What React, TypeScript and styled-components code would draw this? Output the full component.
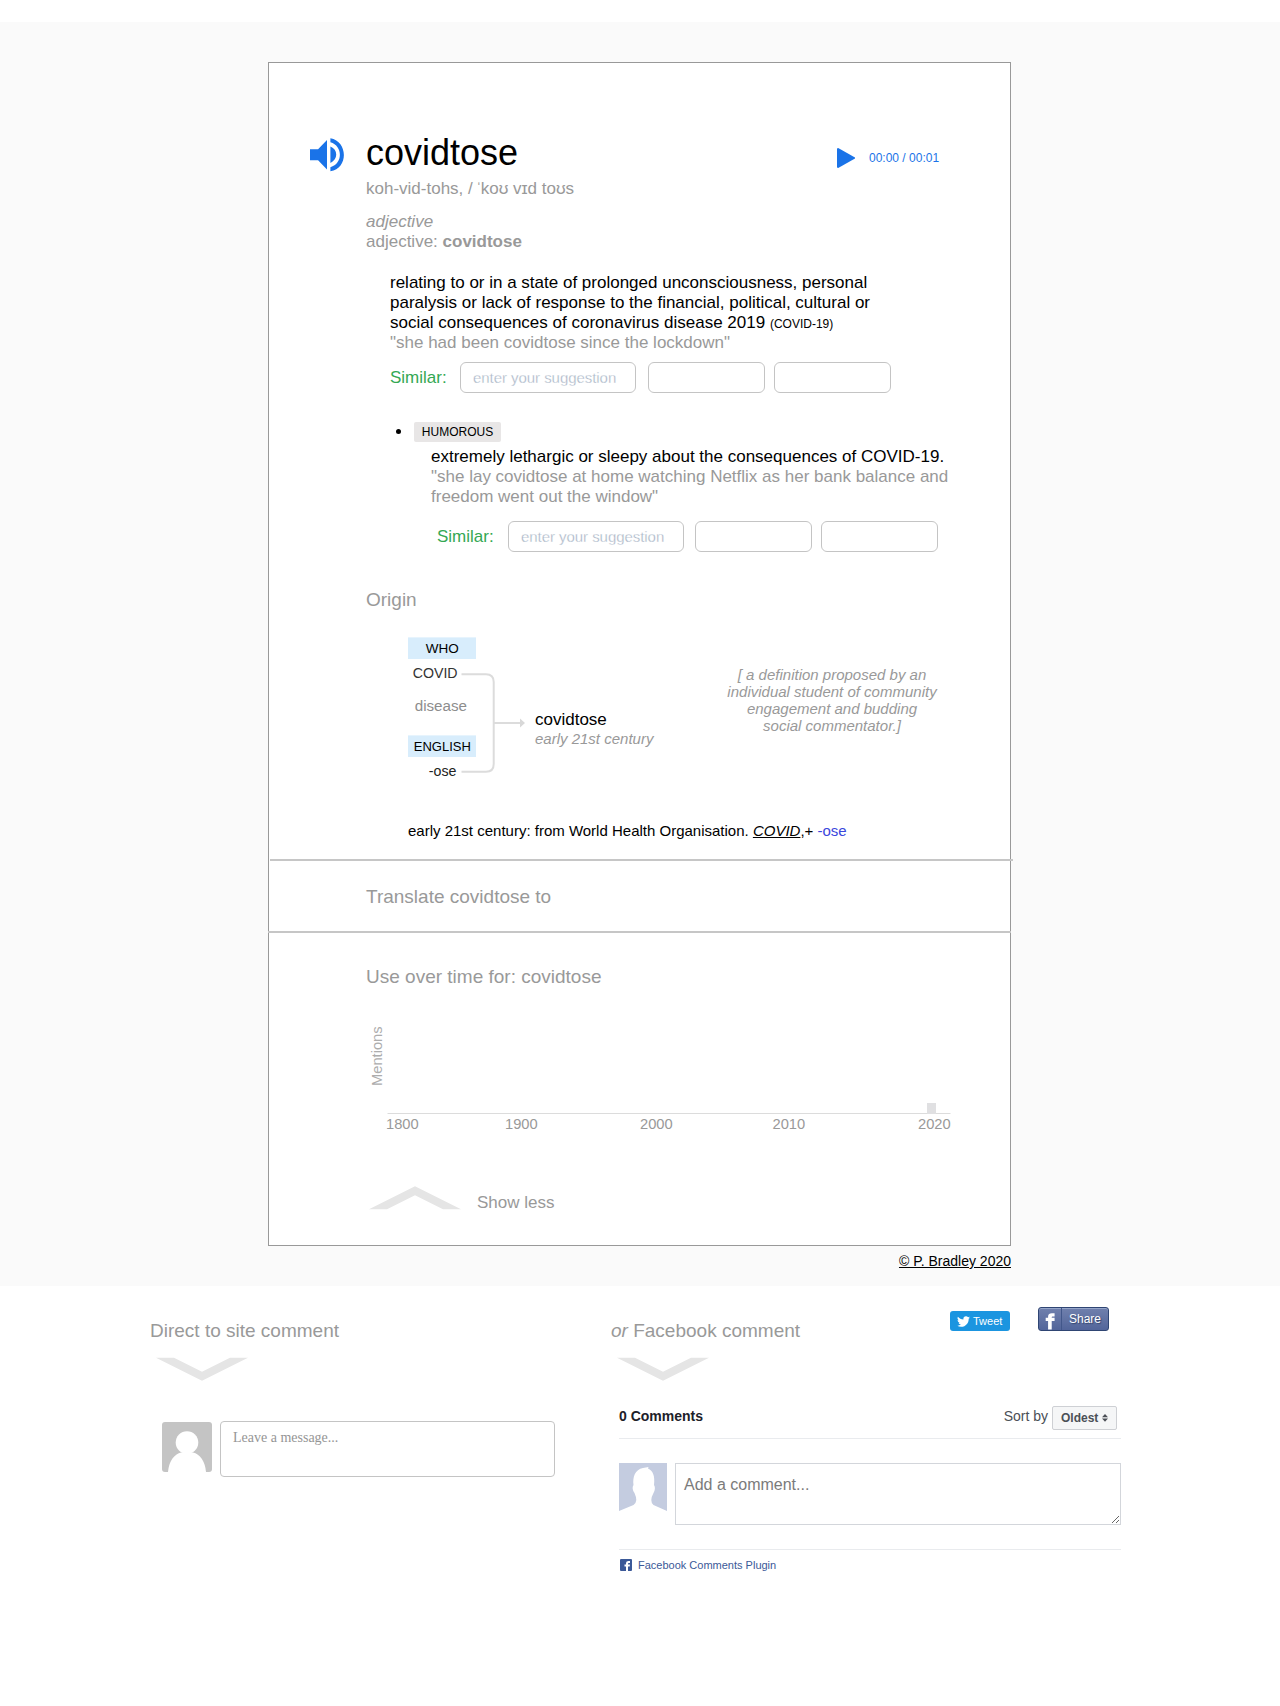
import React from "react";
import styled, { createGlobalStyle } from "styled-components";

const sans = '"Liberation Sans", Arial, sans-serif';
const grey = "#999";

const GlobalStyle = createGlobalStyle`
  * { box-sizing: border-box; }
  body { margin: 0; background: #fff; font-family: ${sans}; color: #000; }
  p, h1, h2, ul { margin: 0; padding: 0; font-weight: normal; }
  a { color: inherit; }
`;

const Page = styled.main`
  width: 1280px;
  min-height: 1706px;
  padding-top: 22px;
`;

const Band = styled.section`
  height: 1264px;
  padding-top: 40px;
  background: #fafafa;
`;

const Card = styled.article`
  width: 743px;
  height: 1184px;
  margin-left: 268px;
  border: 1px solid #999;
  background: #fff;
`;

const Entry = styled.section`
  height: 796px;
  padding: 69px 0 0 97px;
`;

const Header = styled.header`
  display: flex;
  height: 41px;
  margin-left: -57px;
`;

const Speaker = styled.svg`
  width: 34px;
  height: 34px;
  margin: 6px 22px 0 1px;
  fill: #1a73e8;
`;

const Word = styled.h1`
  width: 471px;
  font-size: 36px;
  line-height: 41px;
`;

const Player = styled.div`
  display: flex;
  align-items: center;
  gap: 14px;
  height: 20px;
  margin-top: 16px;
  color: #1a73e8;
  font-size: 12px;
  line-height: 14px;
`;

const Text = styled.p<{ $muted?: boolean; $top?: number }>`
  margin-top: ${(p) => p.$top ?? 0}px;
  color: ${(p) => (p.$muted ? grey : "#000")};
  font-size: 17px;
  line-height: 20px;
`;

const Stress = styled.span`
  margin: 0 -1px 0 -1.5px;
`;

const Heading = styled.h2<{ $top: number }>`
  margin-top: ${(p) => p.$top}px;
  color: ${grey};
  font-size: 19px;
  line-height: 22px;
  white-space: nowrap;
`;

const Sense = styled.div`
  width: 500px;
  margin: 21px 0 0 24px;
`;

const Small = styled.span`
  font-size: 12px;
  line-height: 1;
`;

const SimilarRow = styled.form<{ $left: number; $top: number; $gap: number }>`
  display: grid;
  grid-template-columns: ${(p) => (p.$left === 24 ? 70 : 71)}px 176px 117px 117px;
  align-items: center;
  height: 31px;
  margin: ${(p) => p.$top}px 0 0 ${(p) => p.$left}px;
  input + input { margin-left: ${(p) => p.$gap}px; }
  input + input + input { margin-left: ${(p) => p.$gap + 9}px; }
`;

const SimilarLabel = styled.label`
  color: #34a853;
  font-size: 17px;
  line-height: 20px;
`;

const Suggestion = styled.input<{ $wide?: boolean }>`
  width: ${(p) => (p.$wide ? 176 : 117)}px;
  height: 31px;
  padding: 0 12px;
  border: 1px solid #c4c4c4;
  border-radius: 6px;
  outline: none;
  background: #fff;
  font: 15px ${sans};
  letter-spacing: -0.05px;
  &::placeholder {
    color: #a4b1c3;
    opacity: 1;
    -webkit-text-stroke: 0.3px #fff;
  }
`;

const HumorousRow = styled.div`
  display: flex;
  align-items: center;
  gap: 13px;
  height: 20px;
  margin: 29px 0 5px 30px;
`;

const Bullet = styled.i`
  width: 5px;
  height: 5px;
  margin-bottom: 1px;
  border-radius: 50%;
  background: #000;
`;

const Tag = styled.span`
  width: 87px;
  height: 20px;
  border-radius: 2px;
  background: #e8e6e6;
  font-size: 12px;
  line-height: 20px;
  text-align: center;
`;

const HumorousText = styled.div`
  width: 540px;
  margin-left: 65px;
`;

const OriginRow = styled.div`
  display: flex;
  height: 170px;
  margin: 19px 0 0 42px;
`;

const Diagram = styled.svg`
  width: 120px;
  height: 170px;
  font-family: ${sans};
`;

const Result = styled.div`
  width: 150px;
  margin: 80px 0 0 7px;
`;

const Era = styled.p`
  color: ${grey};
  font-size: 15px;
  font-style: italic;
  line-height: 17px;
`;

const Note = styled(Era)`
  width: 294px;
  margin-top: 36px;
  text-align: center;
`;

const Etymology = styled.p`
  margin: 22px 0 0 42px;
  font-size: 15px;
  line-height: 17px;
  a { font-style: italic; }
  span { color: #3a46dc; }
`;

const Rule = styled.hr<{ $shift: number }>`
  width: 743px;
  height: 2px;
  margin: 0 0 0 ${(p) => p.$shift}px;
  border: 0;
  background: #c6c6c6;
`;

const Translate = styled.section`
  height: 70px;
  padding-left: 97px;
  overflow: hidden;
`;

const Usage = styled.section`
  display: flow-root;
  padding-left: 97px;
`;

const Chart = styled.svg`
  display: block;
  width: 600px;
  height: 130px;
  margin-top: 22px;
  font-family: ${sans};
  font-size: 14.7px;
  fill: ${grey};
`;

const ShowLess = styled.div`
  display: flex;
  gap: 15px;
  margin: 46px 0 0 3px;
`;

const Arrow = styled.svg<{ $up?: boolean }>`
  display: block;
  width: 93px;
  height: 24px;
  fill: #e5e5e5;
  transform: ${(p) => (p.$up ? "scaleY(-1)" : "none")};
`;

const Copyright = styled.p`
  width: 743px;
  margin: 7px 0 0 268px;
  font-size: 14px;
  line-height: 16px;
  text-align: right;
`;

const Comments = styled.section`
  display: grid;
  grid-template-columns: 461px 510px;
  padding: 21px 0 0 150px;
`;

const TopRow = styled.div`
  display: flex;
  align-items: flex-start;
  height: 35px;
  margin-bottom: 15px;
`;

const FbHeading = styled(Heading)`
  width: 339px;
`;

const Tweet = styled.a`
  display: flex;
  align-items: center;
  gap: 3px;
  width: 60px;
  height: 20px;
  margin-top: 4px;
  padding-left: 7px;
  border-radius: 3px;
  background: #1b95e0;
  color: #fff;
  font-size: 11px;
`;

const Share = styled.a`
  display: flex;
  width: 71px;
  height: 24px;
  margin-left: 28px;
  border: 1px solid #2f4573;
  border-radius: 3px;
  background: linear-gradient(#7080ad, #52659a);
  box-shadow: inset 0 1px 0 #95a5c9;
  color: #fff;
  font-size: 12px;
  line-height: 22px;
  text-shadow: 1px 1px 1px #33466f;
  svg { width: 23px; height: 22px; border-right: 1px solid #42578a; }
  span { padding-left: 7px; }
`;

const ArrowSlot = styled.div`
  padding-left: 6px;
`;

const MessageRow = styled.div`
  display: flex;
  gap: 8px;
  margin: 40px 0 0 12px;
`;

const Avatar = styled.svg`
  width: 50px;
  height: 50px;
  margin-top: 1px;
  border-radius: 3px;
`;

const Message = styled.textarea`
  width: 335px;
  height: 56px;
  padding: 8px 12px;
  border: 1px solid #c4c4c4;
  border-radius: 4px;
  resize: none;
  outline: none;
  font: 14px/16px "Liberation Serif", "Times New Roman", serif;
  &::placeholder { color: #959595; opacity: 1; }
`;

const FbPlugin = styled.div`
  width: 502px;
  margin: 25px 0 0 8px;
`;

const FbHead = styled.div`
  display: flex;
  height: 33px;
  padding-right: 4px;
  border-bottom: 1px solid #e9ebee;
  color: #4b4f56;
  font-size: 14px;
  line-height: 20px;
  strong { flex: 1; color: #1d2129; }
`;

const Sort = styled.button`
  display: flex;
  align-items: center;
  gap: 4px;
  width: 65px;
  height: 24px;
  margin-left: 4px;
  padding: 0 0 0 8px;
  border: 1px solid #ced0d4;
  border-radius: 2px;
  background: #f5f6f7;
  color: #4b4f56;
  font: bold 12px/22px ${sans};
`;

const FbCompose = styled.div`
  display: flex;
  gap: 8px;
  height: 111px;
  padding-top: 24px;
  border-bottom: 1px solid #e9ebee;
`;

const FbTextarea = styled.textarea`
  width: 446px;
  height: 62px;
  padding: 12px 8px;
  border: 1px solid #d3d6db;
  outline: none;
  font: 16px/18px ${sans};
  &::placeholder { color: #7b7b7b; opacity: 1; }
`;

const FbFooter = styled.div`
  display: flex;
  align-items: center;
  gap: 6px;
  height: 12px;
  margin: 9px 0 0 1px;
  color: #3b5998;
  font-size: 11px;
`;

function Chevron({ up }: { up?: boolean }) {
  return (
    <Arrow $up={up} viewBox="0 0 93 24">
      <path d="M0 .7H18L46 14.700L74 .7H92L46 23.700Z" />
    </Arrow>
  );
}

function Similar({ left, top, gap }: { left: number; top: number; gap: number }) {
  return (
    <SimilarRow $left={left} $top={top} $gap={gap}>
      <SimilarLabel>Similar:</SimilarLabel>
      <Suggestion $wide placeholder="enter your suggestion" />
      <Suggestion />
      <Suggestion />
    </SimilarRow>
  );
}

function OriginDiagram() {
  return (
    <Diagram viewBox="408 630 120 170">
      <rect x="408" y="637.4" width="68" height="21.6" fill="#d8edfc" />
      <rect x="408" y="735.4" width="68" height="21.6" fill="#d8edfc" />
      <text x="442.3" y="653" fontSize="13.5" textAnchor="middle">WHO</text>
      <text x="412.7" y="678" fontSize="14.2" fill="#333">COVID</text>
      <text x="414.7" y="711" fontSize="15.2" fill="#8d8d8d">disease</text>
      <text x="442.3" y="751" fontSize="13" textAnchor="middle">ENGLISH</text>
      <text x="428.8" y="776" fontSize="14.2" fill="#222">-ose</text>
      <path
        d="M461.5 674.3H486Q493.7 674.3 493.7 682V764Q493.7 771.800 486 771.800H461.5M494 723H521"
        fill="none"
        stroke="#dcdcdc"
        strokeWidth="2"
      />
      <path d="M520 718.5L525 723L520 727.5Z" fill="#d8d8d8" />
    </Diagram>
  );
}

const years = [
  { label: "1800", x: 386 },
  { label: "1900", x: 505 },
  { label: "2000", x: 640 },
  { label: "2010", x: 772.5 },
  { label: "2020", x: 918 },
];

function UsageChart() {
  return (
    <Chart viewBox="366 1010 600 130">
      <text transform="translate(382 1086) rotate(-90)" fill="#adadad">Mentions</text>
      <rect x="387.5" y="1113" width="563" height="1" fill="#dcdcdc" />
      <rect x="927" y="1103" width="9" height="11" fill="#e0e0e2" />
      {years.map((y) => (
        <text key={y.label} x={y.x} y="1129">{y.label}</text>
      ))}
    </Chart>
  );
}

export default function App() {
  return (
    <Page>
      <GlobalStyle />
      <Band>
        <Card>
          <Entry>
            <Header>
              <Speaker viewBox="0 0 35 35">
                <path d="M0 11.7H8.3L17.5 2V32.5L8.3 22.8H0ZM21 8.8C29 12 29 22 21 25.7ZM21 .2C39 3 40 31.500 21 34.300V30C34 26.500 34 8 21 4.400Z" />
              </Speaker>
              <Word>covidtose</Word>
              <Player>
                <svg width="18" height="20" viewBox="0 0 18 20">
                  <path d="M0 1Q0 0 1.2 0L18 9.500V10.500L1.200 20Q0 20 0 19Z" fill="#1a73e8" />
                </svg>
                00:00 / 00:01
              </Player>
            </Header>
            <Text $muted $top={6}>
              koh-vid-tohs, / <Stress>ˈ</Stress>koʊ vɪd toʊs
            </Text>
            <Text $muted $top={13}>
              <em>adjective</em>
              <br />
              adjective: <strong>covidtose</strong>
            </Text>
            <Sense>
              <Text>
                relating to or in a state of prolonged unconsciousness, personal
                <br />
                paralysis or lack of response to the financial, political, cultural or
                <br />
                social consequences of coronavirus disease 2019 <Small>(COVID-19)</Small>
              </Text>
              <Text $muted>"she had been covidtose since the lockdown"</Text>
            </Sense>
            <Similar left={24} top={9} gap={12} />
            <HumorousRow>
              <Bullet />
              <Tag>HUMOROUS</Tag>
            </HumorousRow>
            <HumorousText>
              <Text>extremely lethargic or sleepy about the consequences of COVID-19.</Text>
              <Text $muted>
                "she lay covidtose at home watching Netflix as her bank balance and
                <br />
                freedom went out the window"
              </Text>
            </HumorousText>
            <Similar left={71} top={14} gap={11} />
            <Heading $top={37}>Origin</Heading>
            <OriginRow>
              <OriginDiagram />
              <Result>
                <Text>covidtose</Text>
                <Era>early 21st century</Era>
              </Result>
              <Note>
                [ a definition proposed by an
                <br />
                individual student of community
                <br />
                engagement and budding
                <br />
                social commentator.]
              </Note>
            </OriginRow>
            <Etymology>
              early 21st century: from World Health Organisation. <a href="#covid">COVID</a>,+ <span>-ose</span>
            </Etymology>
          </Entry>
          <Rule $shift={1} />
          <Translate>
            <Heading $top={25}>Translate covidtose to</Heading>
          </Translate>
          <Rule $shift={-1} />
          <Usage>
            <Heading $top={33}>Use over time for: covidtose</Heading>
            <UsageChart />
            <ShowLess>
              <Chevron up />
              <Text $muted $top={7}>Show less</Text>
            </ShowLess>
          </Usage>
        </Card>
        <Copyright>
          <a href="#copyright">© P. Bradley 2020</a>
        </Copyright>
      </Band>
      <Comments>
        <div>
          <TopRow>
            <Heading $top={13}>Direct to site comment</Heading>
          </TopRow>
          <ArrowSlot>
            <Chevron />
          </ArrowSlot>
          <MessageRow>
            <Avatar viewBox="0 0 50 50">
              <rect width="50" height="50" fill="#c4c4c4" />
              <circle cx="25" cy="20.500" r="11.300" fill="#fff" />
              <path d="M6 50C7 38 13 32 19 30.500H31C38 32 43 39 44 50Z" fill="#fff" />
            </Avatar>
            <Message placeholder="Leave a message..." />
          </MessageRow>
        </div>
        <div>
          <TopRow>
            <FbHeading $top={13}>
              <em>or</em> Facebook comment
            </FbHeading>
            <Tweet>
              <svg width="13" height="13" viewBox="0 0 24 24" fill="#fff">
                <path d="M23.950 4.570a10 10 0 0 1-2.820.770 4.960 4.960 0 0 0 2.160-2.720c-.950.550-2 .950-3.130 1.180a4.920 4.920 0 0 0-8.380 4.480C7.690 8.100 4.070 6.130 1.640 3.160a4.820 4.820 0 0 0-.660 2.480c0 1.710.870 3.210 2.190 4.100a4.900 4.900 0 0 1-2.230-.620v.060a4.920 4.920 0 0 0 3.950 4.830 5 5 0 0 1-2.210.080 4.940 4.940 0 0 0 4.600 3.420A9.870 9.870 0 0 1 0 19.540a13.990 13.990 0 0 0 7.560 2.210c9.050 0 13.990-7.500 13.990-13.980 0-.210 0-.420-.020-.630a9.940 9.940 0 0 0 2.420-2.570z" />
              </svg>
              Tweet
            </Tweet>
            <Share>
              <svg viewBox="0 0 23 22" fill="#fff">
                <path d="M9.500 22V13H7V9.700H9.500V8.500C9.500 6 11 5 13.500 5H16.300V8.300H14.500C13.600 8.300 13.300 8.700 13.300 9.700H16.300V13H13.300V22Z" />
              </svg>
              <span>Share</span>
            </Share>
          </TopRow>
          <ArrowSlot>
            <Chevron />
          </ArrowSlot>
          <FbPlugin>
            <FbHead>
              <strong>0 Comments</strong>
              Sort by
              <Sort>
                Oldest
                <svg width="6" height="8" viewBox="0 0 6 8" fill="#4b4f56">
                  <path d="M3 0L6 3.300H0ZM0 4.500H6L3 7.800Z" />
                </svg>
              </Sort>
            </FbHead>
            <FbCompose>
              <svg width="48" height="48" viewBox="0 0 48 48">
                <rect width="48" height="48" fill="#c4cce0" />
                <path
                  d="M0 48L14.500 42Q17 40.500 17.300 37Q17.300 34 15.500 30C13.500 27.500 13 24 14.500 22C13.500 14 16 6.500 24 5L29.500 4L29 5.500C34 7.500 36 13 35 22C36.500 24 36 27.500 34.500 30Q32.300 34 32.300 37Q32.300 40.500 34.500 42L48 48Z"
                  fill="#fff"
                />
              </svg>
              <FbTextarea placeholder="Add a comment..." />
            </FbCompose>
            <FbFooter>
              <svg width="12" height="12" viewBox="0 0 12 12">
                <rect width="12" height="12" rx="1" fill="#3b5998" />
                <path d="M6 12V7.500H4.500V5.500H6V4.500C6 2.800 7 2 8.500 2H10V4H8.800C8.200 4 8 4.300 8 4.800V5.500H10L9.700 7.500H8V12Z" fill="#fff" />
              </svg>
              Facebook Comments Plugin
            </FbFooter>
          </FbPlugin>
        </div>
      </Comments>
    </Page>
  );
}
